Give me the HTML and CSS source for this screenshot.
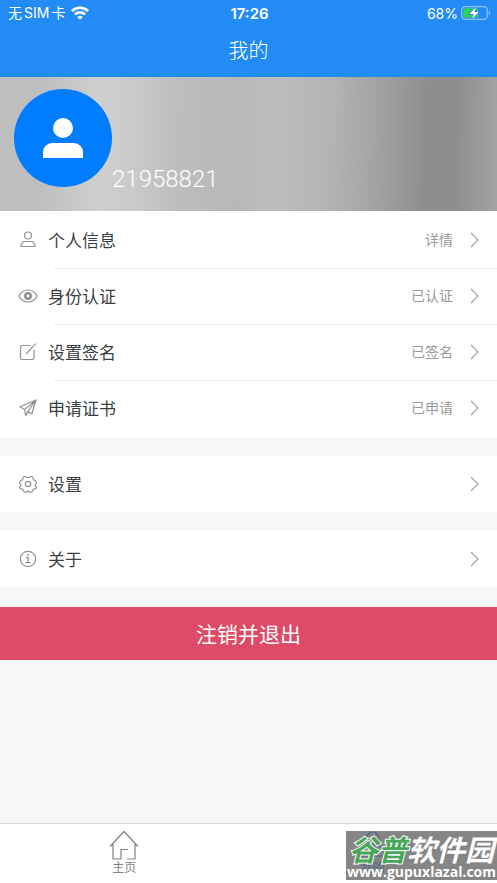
FILE: index.html
```html
<!DOCTYPE html>
<html lang="zh-CN">
<head>
<meta charset="utf-8">
<meta name="viewport" content="width=device-width, initial-scale=1">
<title>我的</title>
<link rel="stylesheet" href="styles.css">
</head>
<body>
<header class="header">
  <div class="status">
    <div class="status-left">
      <span class="carrier"><span>无</span><span>SIM</span><span>卡</span></span>
      <svg class="wifi" viewBox="0 0 18 14" aria-hidden="true">
        <g fill="none" stroke="#fff" stroke-width="2.6"><path d="M.9 5.1a11.6 11.6 0 0 1 16.2 0"/><path d="M4 8.4a7.2 7.2 0 0 1 10 0"/></g>
        <path d="M9 13.7 6.3 11a3.9 3.9 0 0 1 5.4 0Z" fill="#fff"/>
      </svg>
    </div>
    <time class="clock">17:26</time>
    <div class="status-right">
      <span>68%</span>
      <svg class="battery" viewBox="0 0 30 14" aria-hidden="true">
        <rect x=".7" y=".7" width="25.6" height="12.6" rx="3.6" fill="none" stroke="#91c4fb" stroke-width="1.2"/>
        <path d="M27.8 4.8c2 .8 2 3.6 0 4.4Z" fill="#91c4fb"/>
        <rect x="2.2" y="2.2" width="15" height="9.6" rx="2" fill="#30d158"/>
        <path d="M15.1.8 8.600 7.900h4.100l-1.800 5.300 6.800-7.300h-4.200Z" fill="#fff" stroke="#238bf5" stroke-width="1.600" paint-order="stroke"/>
      </svg>
    </div>
  </div>
  <h1 class="title">我的</h1>
</header>

<main class="content">
  <section class="profile">
    <svg class="avatar" viewBox="0 0 98 98" role="img" aria-label="头像">
      <circle cx="49" cy="49" r="49" fill="#007dff"/>
      <circle cx="49" cy="39" r="10" fill="#fff"/>
      <path d="M29 69v-6a9 9 0 0 1 9-9h22a9 9 0 0 1 9 9v6Z" fill="#fff"/>
    </svg>
    <span class="user-id">21958821</span>
  </section>

  <nav class="group group-list">
    <a class="row" href="#info">
      <svg class="icon" viewBox="0 0 20 20"><circle cx="10" cy="5.500" r="3.500"/><path d="M3 16.500c0-3.500 1.600-5 4.200-5h5.600c2.600 0 4.200 1.500 4.200 5Z"/></svg>
      <span class="label">个人信息</span><span class="value">详情</span>
      <svg class="chevron" viewBox="0 0 10 16"><path d="m1 1 7 7-7 7"/></svg>
    </a>
    <a class="row" href="#identity">
      <svg class="icon" viewBox="0 0 20 20"><path d="M.8 10C3 6 6.200 4 10 4s7 2 9.200 6c-2.200 4-5.400 6-9.200 6S3 14 .8 10Z"/><circle cx="10" cy="10" r="2.700" stroke-width="2.600"/></svg>
      <span class="label">身份认证</span><span class="value">已认证</span>
      <svg class="chevron" viewBox="0 0 10 16"><path d="m1 1 7 7-7 7"/></svg>
    </a>
    <a class="row" href="#signature">
      <svg class="icon" viewBox="0 0 20 20"><path d="M12 3.500H4.200A1.700 1.700 0 0 0 2.500 5.200v10.600a1.700 1.700 0 0 0 1.700 1.700h10.100a1.700 1.700 0 0 0 1.700-1.700V8M8.500 11.500l7.200-7.700M16.700 2.800l.7-.8"/></svg>
      <span class="label">设置签名</span><span class="value">已签名</span>
      <svg class="chevron" viewBox="0 0 10 16"><path d="m1 1 7 7-7 7"/></svg>
    </a>
    <a class="row" href="#certificate">
      <svg class="icon" viewBox="0 0 20 20"><path d="M18 2 1.800 8.700l4.900 2.900L18 2l-4.200 14-3.700-2.900L18 2M6.700 11.600l1 6 2.400-4.500"/></svg>
      <span class="label">申请证书</span><span class="value">已申请</span>
      <svg class="chevron" viewBox="0 0 10 16"><path d="m1 1 7 7-7 7"/></svg>
    </a>
  </nav>

  <nav class="group">
    <a class="row" href="#settings">
      <svg class="icon" viewBox="0 0 20 20"><path d="M7.200 2.300q.8 1.400 2.800 1.400t2.800-1.400l2.200.9q-.3 1.700.7 2.700t2.100.9l.7 2.200q-1.400.5-1.400 1.900t1.400 1.900l-.9 2.100q-1.700-.2-2.600.7t-.7 2.200l-2 .7q-.7-1.400-2.300-1.400t-2.300 1.400l-2-.7q.2-1.500-.7-2.300t-2.600-.6l-.9-2.100q1.400-.5 1.400-1.900t-1.400-1.900l.7-2.200q1.200.1 2.100-.9t.7-2.700Z"/><circle cx="10" cy="10" r="2.700"/></svg>
      <span class="label">设置</span>
      <svg class="chevron" viewBox="0 0 10 16"><path d="m1 1 7 7-7 7"/></svg>
    </a>
  </nav>

  <nav class="group">
    <a class="row" href="#about">
      <svg class="icon" viewBox="0 0 20 20"><circle cx="10" cy="10" r="7.700"/><path d="M8.500 8.700h1.700v4.800M8 13.700h4.200M9.300 6h1.200" stroke-width="1.300"/></svg>
      <span class="label">关于</span>
      <svg class="chevron" viewBox="0 0 10 16"><path d="m1 1 7 7-7 7"/></svg>
    </a>
  </nav>

  <button class="logout" type="button">注销并退出</button>
</main>

<footer class="tabbar">
  <a class="tab" href="#home">
    <svg class="tab-icon" viewBox="0 0 30 30"><path d="M1 16.500 15 1.500l14 15M4 14v15h8V19.500h7M18 29h8V14"/></svg>
    <span>主页</span>
  </a>
  <a class="tab tab-active" href="#me">
    <svg class="tab-icon" viewBox="0 0 30 30"><circle cx="15" cy="8" r="6"/><path d="M4 26c0-7 3-10 7-10h8c4 0 7 3 7 10Z"/></svg>
    <span>我的</span>
  </a>
  <div class="watermark">
    <div class="mark-name"><span class="mark-green">谷普</span>软件园</div>
    <div class="mark-url">www.gupuxlazal.com</div>
  </div>
</footer>
</body>
</html>
```
FILE: styles.css
```css
* {
  box-sizing: border-box;
}

body {
  margin: 0;
  min-height: 100vh;
  display: flex;
  flex-direction: column;
  background: #f8f8f8;
  color: #3a3f45;
  font-family: Inter, "Noto Sans CJK SC", sans-serif;
  font-weight: 300;
}

a {
  color: inherit;
  text-decoration: none;
}

svg {
  display: block;
  flex: none;
}

.header {
  background: #238bf5;
  color: #fff;
  padding-bottom: 10px;
}

.status {
  display: grid;
  grid-template-columns: 1fr auto 1fr;
  align-items: center;
  height: 26px;
  padding: 0 6px 0 8px;
  font-size: 14px;
  font-weight: 400;
}

.status-left,
.status-right {
  display: flex;
  align-items: center;
  gap: 6px;
}

.status-right {
  justify-content: flex-end;
  gap: 3px;
}

.carrier {
  display: flex;
  align-items: baseline;
  gap: 2px;
  line-height: 20px;
}

.wifi {
  width: 18px;
  height: 14px;
}

.battery {
  width: 30px;
  height: 14px;
}

.clock {
  font-size: 15px;
  font-weight: 600;
}

.title {
  margin: 10px 0 0;
  font-size: 20px;
  line-height: 31px;
  font-weight: 300;
  text-align: center;
}

.content {
  flex: 1;
}

.profile {
  display: flex;
  align-items: flex-end;
  padding: 12px 14px 24px;
  background: linear-gradient(91deg, #bfbfbf 0%, #bebebe 8%, #cfcfcf 20%, #cbcbcb 26%, #bcbcbc 37%, #b8b8b8 48%, #bdbdbd 55%, #b3b3b3 67%, #a0a0a0 77%, #8d8d8d 86%, #8d8d8d 91%, #a3a3a3 100%);
}

.avatar {
  width: 98px;
  height: 98px;
}

.user-id {
  color: #fff;
  font-family: Roboto, sans-serif;
  font-size: 24px;
  line-height: 16px;
}

.group {
  margin-bottom: 19px;
  background: #fff;
}

.group-list {
  padding: 1px 0;
}

.row {
  position: relative;
  display: flex;
  align-items: center;
  height: 56px;
  padding: 0 17px 0 18px;
}

.row + .row::before {
  content: "";
  position: absolute;
  top: 0;
  left: 53px;
  right: 0;
  border-top: 1px solid #efefef;
}

.icon {
  width: 20px;
  height: 20px;
  fill: none;
  stroke: #929292;
  stroke-width: 1.2;
  stroke-linejoin: round;
  stroke-linecap: round;
}

.label {
  flex: 1;
  margin-left: 10px;
  padding-top: 2px;
  font-size: 17px;
  font-weight: 400;
  line-height: 24px;
}

.value {
  margin-right: 17px;
  color: #999;
  font-size: 14px;
  font-weight: 400;
  line-height: 20px;
}

.chevron {
  width: 10px;
  height: 16px;
  fill: none;
  stroke: #aaa;
  stroke-width: 1.4;
}

.logout {
  display: block;
  width: 100%;
  height: 53px;
  margin: 20px 0;
  padding: 0 0 2px;
  border: 0;
  background: #dd4b67;
  color: #fff;
  font-family: inherit;
  font-size: 21px;
  font-weight: 400;
}

.tabbar {
  position: relative;
  display: flex;
  height: 60px;
  border-top: 1px solid #d6d7da;
  background: #fff;
}

.tab {
  flex: 1;
  display: flex;
  flex-direction: column;
  align-items: center;
  padding-top: 6px;
  color: #7d828b;
  font-size: 12px;
  font-weight: 400;
  line-height: 16px;
}

.tab-icon {
  width: 30px;
  height: 30px;
  fill: none;
  stroke: currentColor;
  stroke-width: 1.2;
}

.tab-active {
  color: #238bf5;
}

.watermark {
  position: absolute;
  right: 0;
  bottom: 3px;
  width: 151px;
  height: 49px;
  background: rgba(90, 90, 90, 0.74);
  color: #fff;
  text-align: center;
  white-space: nowrap;
}

.mark-name {
  font-family: "Noto Sans CJK SC", sans-serif;
  font-size: 29px;
  font-style: italic;
  font-weight: 700;
  line-height: 35px;
}

.mark-green {
  color: #45a858;
  -webkit-text-stroke: 2px #fff;
  paint-order: stroke fill;
}

.mark-url {
  font-family: "Open Sans", sans-serif;
  font-size: 14px;
  font-weight: 700;
  line-height: 12px;
}
```
